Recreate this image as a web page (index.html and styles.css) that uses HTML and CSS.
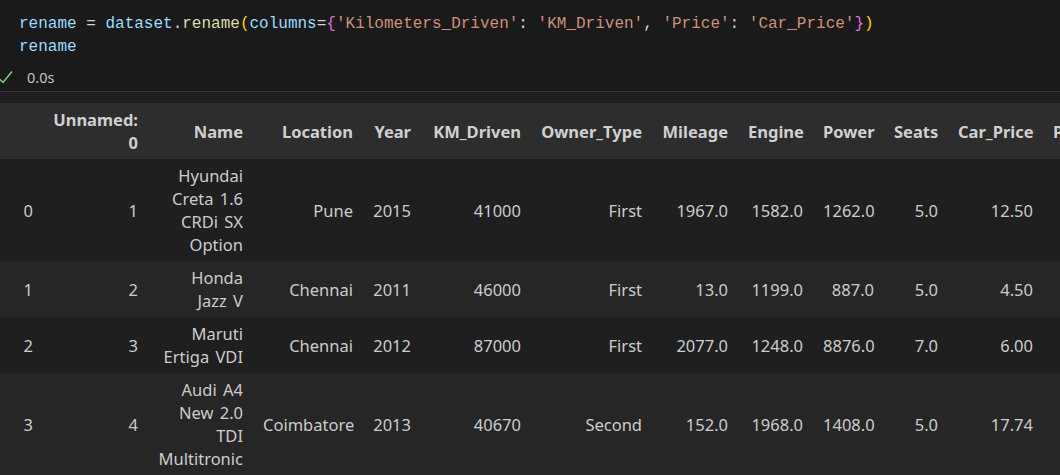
FILE: index.html
```html
<!DOCTYPE html>
<html>
<head>
<meta charset="utf-8">
<link rel="stylesheet" href="styles.css">
</head>
<body>
<div class="nb">
  <div class="code-cell">
    <pre class="code"><span class="v">rename</span> <span class="op">=</span> <span class="v">dataset</span><span class="op">.</span><span class="fn">rename</span><span class="b1">(</span><span class="v">columns</span><span class="op">=</span><span class="b2">{</span><span class="s">'Kilometers_Driven'</span><span class="op">: </span><span class="s">'KM_Driven'</span><span class="op">, </span><span class="s">'Price'</span><span class="op">: </span><span class="s">'Car_Price'</span><span class="b2">}</span><span class="b1">)</span>
<span class="v">rename</span></pre>
  </div>
  <div class="status">
    <svg class="check" width="14" height="14" viewBox="0 0 14 14"><polyline points="-1,8.5 3,12.5 12,1.5" fill="none" stroke="#89d185" stroke-width="1.4"/></svg>
    <span class="time">0.0s</span>
  </div>
  <div class="output">
    <table class="df">
      <thead>
        <tr>
          <th class="w-idx"></th>
          <th class="w-un">Unnamed:<br>0</th>
          <th class="w-name">Name</th>
          <th class="w-loc">Location</th>
          <th class="w-year">Year</th>
          <th class="w-km">KM_Driven</th>
          <th class="w-own">Owner_Type</th>
          <th class="w-mil">Mileage</th>
          <th class="w-eng">Engine</th>
          <th class="w-pow">Power</th>
          <th class="w-seat">Seats</th>
          <th class="w-price">Car_Price</th>
          <th class="w-last">Price_Category</th>
        </tr>
      </thead>
      <tbody>
        <tr class="r-dark">
          <td>0</td><td>1</td><td>Hyundai Creta 1.6 CRDi SX Option</td><td>Pune</td><td>2015</td><td>41000</td><td>First</td><td>1967.0</td><td>1582.0</td><td>1262.0</td><td>5.0</td><td>12.50</td><td></td>
        </tr>
        <tr class="r-light">
          <td>1</td><td>2</td><td>Honda Jazz V</td><td>Chennai</td><td>2011</td><td>46000</td><td>First</td><td>13.0</td><td>1199.0</td><td>887.0</td><td>5.0</td><td>4.50</td><td></td>
        </tr>
        <tr class="r-dark">
          <td>2</td><td>3</td><td>Maruti Ertiga VDI</td><td>Chennai</td><td>2012</td><td>87000</td><td>First</td><td>2077.0</td><td>1248.0</td><td>8876.0</td><td>7.0</td><td>6.00</td><td></td>
        </tr>
        <tr class="r-light">
          <td>3</td><td>4</td><td>Audi A4 New 2.0 TDI Multitronic</td><td>Coimbatore</td><td>2013</td><td>40670</td><td>Second</td><td>152.0</td><td>1968.0</td><td>1408.0</td><td>5.0</td><td>17.74</td><td></td>
        </tr>
      </tbody>
    </table>
  </div>
</div>
</body>
</html>
```
FILE: styles.css
```css
html, body {
  margin: 0;
  padding: 0;
  overflow: hidden;
  background: #1f1f1f;
}
.nb {
  width: 1060px;
  height: 475px;
  overflow: hidden;
  font-family: "Noto Sans", "Open Sans", sans-serif;
  color: #cccccc;
}
.code-cell {
  background: #1a1a1a;
  padding: 13px 0 4px 19px;
}
.code {
  margin: 0;
  font-family: "Liberation Mono", "DejaVu Sans Mono", monospace;
  font-size: 16px;
  line-height: 23px;
  color: #d4d4d4;
  white-space: pre;
}
.v { color: #9cdcfe; }
.op { color: #d4d4d4; }
.fn { color: #dcdcaa; }
.b1 { color: #ffd700; }
.b2 { color: #da70d6; }
.s { color: #ce9178; }
.status {
  background: #1a1a1a;
  height: 28px;
  display: flex;
  align-items: center;
  border-bottom: 1px solid #363636;
}
.check {
  display: block;
  margin-left: 0;
  margin-right: 13px;
}
.time {
  font-size: 14.5px;
  color: #c4c4c4;
}
.output {
  padding-top: 11px;
  background: #1f1f1f;
}
.df {
  border-collapse: collapse;
  table-layout: fixed;
  width: 1193px;
  font-size: 16.5px;
  line-height: 23px;
}
.df th, .df td {
  box-sizing: border-box;
  padding: 5px 10px;
  text-align: right;
  vertical-align: middle;
}
.df thead th {
  background: #2d2d2d;
  font-weight: bold;
  color: #d0d0d0;
  white-space: nowrap;
}
.df td {
  color: #cccccc;
  word-spacing: 2px;
}
.r-dark { background: #1f1f1f; }
.r-light { background: #262626; }
.w-idx { width: 43px; }
.w-un { width: 105px; }
.w-name { width: 105px; }
.w-loc { width: 110px; }
.w-year { width: 58px; }
.w-km { width: 110px; }
.w-own { width: 121px; }
.w-mil { width: 86px; }
.w-eng { width: 75px; }
.w-pow { width: 71px; }
.w-seat { width: 64px; }
.w-price { width: 95px; }
.w-last { width: 150px; text-align: left !important; }
```
